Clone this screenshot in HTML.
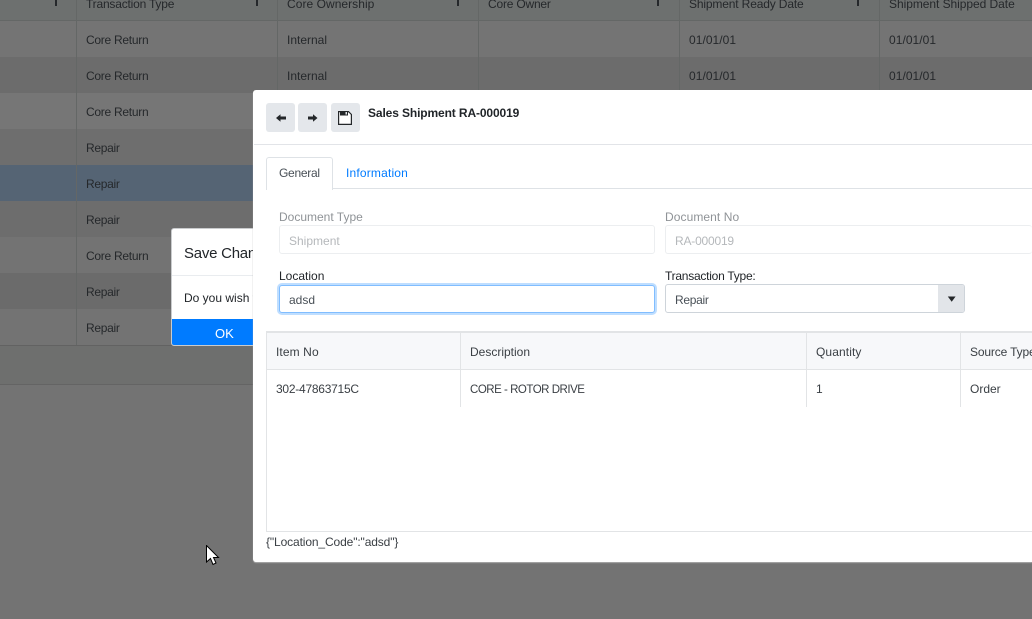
<!DOCTYPE html>
<html><head><meta charset="utf-8"><style>
html,body{margin:0;padding:0;width:1032px;height:619px;overflow:hidden;background:#808080;font-family:"Liberation Sans",sans-serif;font-size:12px;color:#212529}
div,span{position:absolute;white-space:nowrap;box-sizing:border-box}
.r{left:0;width:1032px;height:36px}
.v{width:1px;background:#707372}
.t{color:#2a2d30;line-height:16px}
.h{color:#2a2d30;line-height:16px}
.l{color:#212529;line-height:16px}
.d{color:#8f9397;line-height:16px}
.g{color:#b5b8bb;line-height:16px}
.btn{width:29px;height:29px;background:#e4e7eb;border-radius:3px;top:103px}
.inp{height:29px;border-radius:3px;background:#fff}
.cr{letter-spacing:-.27px}
.rp{letter-spacing:-.3px}
</style></head><body>
<div style="left:0;top:0;width:1032px;height:21px;background:#7a7d7c"></div>
<div style="left:0;top:20px;width:1032px;height:1px;background:#707372"></div>
<div class="r" style="top:21px;background:#828282"></div>
<div class="r" style="top:57px;background:#797979"></div>
<div class="r" style="top:93px;background:#848484"></div>
<div class="r" style="top:129px;background:#7b7b7b"></div>
<div class="r" style="top:165px;background:#5f7082"></div>
<div class="r" style="top:201px;background:#7a7a7a"></div>
<div class="r" style="top:237px;background:#808080"></div>
<div class="r" style="top:273px;background:#787878"></div>
<div class="r" style="top:309px;background:#808080"></div>
<div style="left:0;top:345px;width:1032px;height:1px;background:#6e6e6e"></div>
<div style="left:0;top:346px;width:1032px;height:38px;background:#7b7c7b"></div>
<div style="left:0;top:384px;width:1032px;height:1px;background:#707070"></div>
<div class="v" style="left:76px;top:0;height:345px"></div>
<div class="v" style="left:277px;top:0;height:345px"></div>
<div class="v" style="left:478px;top:0;height:345px"></div>
<div class="v" style="left:679px;top:0;height:345px"></div>
<div class="v" style="left:879px;top:0;height:345px"></div>

<span class="h" style="left:86px;top:-4px;letter-spacing:-.2px">Transaction Type</span>
<span class="h" style="left:287px;top:-4px;letter-spacing:.05px">Core Ownership</span>
<span class="h" style="left:488px;top:-4px;letter-spacing:-.2px">Core Owner</span>
<span class="h" style="left:689px;top:-4px;letter-spacing:-.15px">Shipment Ready Date</span>
<span class="h" style="left:889px;top:-4px;letter-spacing:-.05px">Shipment Shipped Date</span>
<div style="left:55px;top:0;width:2px;height:6px;background:#2a2d30"></div>
<div style="left:256px;top:0;width:2px;height:6px;background:#2a2d30"></div>
<div style="left:457px;top:0;width:2px;height:6px;background:#2a2d30"></div>
<div style="left:657px;top:0;width:2px;height:6px;background:#2a2d30"></div>
<div style="left:857px;top:0;width:2px;height:6px;background:#2a2d30"></div>

<span class="t cr" style="left:86px;top:32px">Core Return</span>
<span class="t cr" style="left:86px;top:68px">Core Return</span>
<span class="t cr" style="left:86px;top:104px">Core Return</span>
<span class="t rp" style="left:86px;top:140px">Repair</span>
<span class="t rp" style="left:86px;top:176px">Repair</span>
<span class="t rp" style="left:86px;top:212px">Repair</span>
<span class="t cr" style="left:86px;top:248px">Core Return</span>
<span class="t rp" style="left:86px;top:284px">Repair</span>
<span class="t rp" style="left:86px;top:320px">Repair</span>
<span class="t" style="left:287px;top:32px">Internal</span>
<span class="t" style="left:287px;top:68px">Internal</span>
<span class="t" style="left:689px;top:32px;letter-spacing:.05px">01/01/01</span>
<span class="t" style="left:689px;top:68px;letter-spacing:.05px">01/01/01</span>
<span class="t" style="left:889px;top:32px;letter-spacing:.05px">01/01/01</span>
<span class="t" style="left:889px;top:68px;letter-spacing:.05px">01/01/01</span>

<div style="left:0;top:0;width:1032px;height:619px;background:rgba(0,0,0,.1)"></div>

<!-- confirm dialog -->
<div style="left:171px;top:228px;width:90px;height:118px;background:#fff;border:1px solid #c9cbcd;border-radius:3px;overflow:hidden">
<span style="left:12px;top:15px;font-size:15px;line-height:20px;color:#212529;letter-spacing:-.25px">Save Changes</span>
<div style="left:0;top:46px;width:90px;height:1px;background:#e9ecef"></div>
<span style="left:12px;top:61px;line-height:16px;color:#212529">Do you wish to</span>
<div style="left:0;top:90px;width:90px;height:27px;background:#007bff"></div>
<span style="left:43px;top:96px;line-height:17px;font-size:13px;color:#fff">OK</span>
</div>

<!-- main modal -->
<div style="left:253px;top:90px;width:779px;height:472px;background:#fff;border-radius:3px 0 0 3px;box-shadow:0 1px 1px #aaa"></div>
<div class="btn" style="left:266px"></div>
<div class="btn" style="left:298px"></div>
<div class="btn" style="left:331px"></div>
<svg style="position:absolute;left:266px;top:103px" width="94" height="29" viewBox="0 0 94 29">
<path d="M10 15 L14.5 11.3 V13.5 H20 V16.5 H14.5 V18.7 Z" fill="#24272a"/>
<path d="M51.5 15 L47 11.3 V13.5 H42 V16.5 H47 V18.7 Z" fill="#24272a"/>
<path d="M72.6 8.6 H82.5 L85.4 11.5 V21.4 H72.6 Z" fill="#fff" stroke="#24272a" stroke-width="1.2"/>
<rect x="74" y="8" width="8" height="4.5" fill="#24272a"/>
<rect x="79.5" y="9" width="1.5" height="2.5" fill="#e4e7eb"/>
</svg>
<span style="left:368px;top:105px;font-weight:bold;line-height:16px;color:#212529;letter-spacing:-.12px">Sales Shipment RA-000019</span>
<div style="left:254px;top:144px;width:778px;height:1px;background:#e2e4e8"></div>

<div style="left:266px;top:188px;width:766px;height:1px;background:#dee2e6"></div>
<div style="left:266px;top:157px;width:67px;height:33px;background:#fff;border:1px solid #dee2e6;border-bottom:0;border-radius:3px 3px 0 0"></div>
<span style="left:279px;top:165px;line-height:16px;color:#495057;letter-spacing:-.28px">General</span>
<span style="left:346px;top:165px;line-height:16px;color:#007bff;letter-spacing:.18px">Information</span>

<span class="d" style="left:279px;top:209px">Document Type</span>
<span class="d" style="left:665px;top:209px;letter-spacing:.08px">Document No</span>
<div class="inp" style="left:279px;top:225px;width:376px;border:1px solid #eceef0"></div>
<div class="inp" style="left:665px;top:225px;width:367px;border:1px solid #eceef0;border-right:0"></div>
<span class="g" style="left:289px;top:233px">Shipment</span>
<span class="g" style="left:675px;top:233px;letter-spacing:-.2px">RA-000019</span>

<span class="l" style="left:279px;top:268px">Location</span>
<span class="l" style="left:665px;top:268px;letter-spacing:-.25px">Transaction Type:</span>
<div class="inp" style="left:279px;top:285px;width:376px;height:28px;border:1px solid #80bdff;box-shadow:0 0 0 2px #bfdeff"></div>
<span style="left:289px;top:292px;line-height:16px;color:#495057">adsd</span>
<div class="inp" style="left:665px;top:284px;width:300px;border:1px solid #ced4da;overflow:hidden">
<div style="left:272px;top:0;width:27px;height:27px;background:#e2e5e9"></div>
</div>
<span style="left:675px;top:292px;line-height:16px;color:#495057;letter-spacing:-.3px">Repair</span>
<svg style="position:absolute;left:946px;top:294px" width="11" height="9"><path d="M1.8 2.5 H9.6 L5.7 7.8 Z" fill="#24272a"/></svg>

<!-- grid -->
<div style="left:266px;top:331px;width:766px;height:201px;border-top:2px solid #e2e4e6;border-left:1px solid #e2e4e6;border-bottom:1px solid #e2e4e6"></div>
<div style="left:267px;top:333px;width:765px;height:36px;background:#f7f8fa"></div>
<div style="left:267px;top:369px;width:765px;height:1px;background:#e2e4e6"></div>
<div style="left:460px;top:333px;width:1px;height:74px;background:#e2e4e6"></div>
<div style="left:806px;top:333px;width:1px;height:74px;background:#e2e4e6"></div>
<div style="left:960px;top:333px;width:1px;height:74px;background:#e2e4e6"></div>
<span class="l" style="left:276px;top:344px;color:#3a3f44;letter-spacing:.1px">Item No</span>
<span class="l" style="left:470px;top:344px;color:#3a3f44">Description</span>
<span class="l" style="left:816px;top:344px;color:#3a3f44;letter-spacing:.1px">Quantity</span>
<span class="l" style="left:970px;top:344px;color:#3a3f44;letter-spacing:-.15px">Source Type</span>
<span class="l" style="left:276px;top:381px;color:#3a3f44;letter-spacing:-.25px">302-47863715C</span>
<span class="l" style="left:470px;top:382px;color:#3a3f44;font-size:11.5px;letter-spacing:-.48px">CORE - ROTOR DRIVE</span>
<span class="l" style="left:816px;top:381px;color:#3a3f44">1</span>
<span class="l" style="left:970px;top:381px;color:#3a3f44">Order</span>
<span class="l" style="left:266px;top:534px;color:#3a3f44;letter-spacing:-.12px">{"Location_Code":"adsd"}</span>

<!-- cursor -->
<svg style="position:absolute;left:206px;top:545px" width="14" height="22" viewBox="0 0 14 22">
<path d="M0.5 0.5 V17 L4.5 13.5 L7 19.5 L10 18 L7.5 12.5 H12.5 Z" fill="#fff" stroke="#000" stroke-width="1"/>
</svg>
</body></html>
